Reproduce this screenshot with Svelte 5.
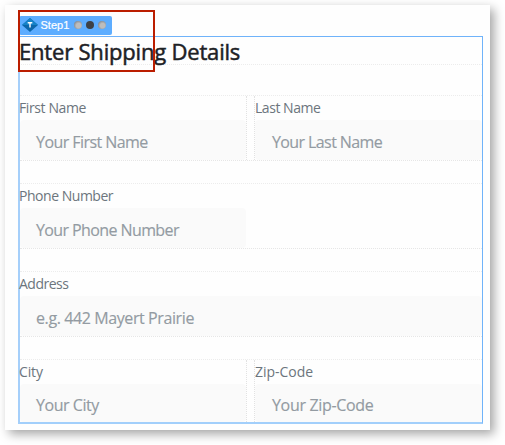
<script>
  const rows = [
    [
      { label: 'First Name', hint: 'Your First Name', labelSpacing: -0.4, hintSpacing: -0.56 },
      { label: 'Last Name', hint: 'Your Last Name', labelSpacing: -0.46, hintSpacing: -0.6 },
    ],
    [{ label: 'Phone Number', hint: 'Your Phone Number', labelSpacing: -0.47, hintSpacing: -0.6, half: true }],
    [{ label: 'Address', hint: 'e.g. 442 Mayert Prairie', labelSpacing: -0.5, hintSpacing: -0.4 }],
    [
      { label: 'City', hint: 'Your City', labelSpacing: -0.15, hintSpacing: -0.46 },
      { label: 'Zip-Code', hint: 'Your Zip-Code', labelSpacing: -0.03, hintSpacing: -0.33 },
    ],
  ];
</script>

<main>
  <section class="card">
    <form class="step">
      <h1>Enter Shipping Details</h1>
      {#each rows as row}
        <div class="row" class:single={row.length === 1}>
          {#each row as field}
            <div class="col" class:half={field.half}>
              <span class="label" style="letter-spacing: {field.labelSpacing}px">{field.label}</span>
              <div class="input" style="letter-spacing: {field.hintSpacing}px"><span>{field.hint}</span></div>
            </div>
          {/each}
        </div>
      {/each}
      <div class="tag">
        <svg class="logo" width="16" height="14" viewBox="0 0 16 14">
          <path d="M8 0L16 7L8 14L0 7Z" fill="#0c67ab" />
          <path d="M8 0L16 7H0Z" fill="#1683c8" />
          <path d="M5.7 4.8H10.3M8 4.8V9.6" stroke="#fff" stroke-width="1.4" fill="none" />
        </svg>
        <span class="name">Step1</span>
        <i></i><i class="on"></i><i></i>
      </div>
      <div class="marker"></div>
    </form>
  </section>
</main>

<style>
  :global(body) { margin: 0; background: #fff; }
  main {
    box-sizing: border-box;
    width: 505px;
    height: 445px;
    padding: 5px 15px 15px 5px;
    overflow: hidden;
    background: #fff;
    font-family: "Open Sans", "Noto Sans", sans-serif;
  }
  .card {
    box-sizing: border-box;
    width: 485px;
    height: 425px;
    padding: 31px 7px 6px 13px;
    background: #fefefe;
    box-shadow: 4px 4px 10px rgba(0, 0, 0, .36);
  }
  .step {
    position: relative;
    box-sizing: border-box;
    width: 465px;
    height: 388px;
    border: 1px solid #6fb3fa;
    border-left: 2px solid #a5cffa;
    border-bottom: 2px solid #a2cffb;
  }
  h1 {
    box-sizing: border-box;
    height: 28px;
    margin: 0 0 30px -1px;
    border-bottom: 1px dotted #ececec;
    color: #1d2125;
    font-size: 22px;
    font-weight: 400;
    -webkit-text-stroke: .5px #1d2125;
    line-height: 28px;
    letter-spacing: -.19px;
    white-space: nowrap;
  }
  .row {
    display: flex;
    gap: 7px;
    box-sizing: border-box;
    height: 66px;
    margin-bottom: 22px;
    border-top: 1px dotted #ececec;
    border-bottom: 1px dotted #e6e6e6;
  }
  .row:nth-of-type(4) { height: 63px; margin: 0; border-bottom: 0; }
  .col { flex: 1; box-sizing: border-box; min-width: 0; }
  .row:not(.single) .col:first-child { flex: 0 0 227px; border-right: 1px dotted #e2e2e2; }
  .row:not(.single) .col:last-child { border-left: 1px dotted #e2e2e2; }
  .row:not(.single) .col:last-child .label { margin-left: 0; }
  .half { flex: 0 0 226px; }
  .label {
    display: block;
    height: 24px;
    color: #6c757d;
    font-size: 14px;
    line-height: 23px;
    margin-left: -1px;
    white-space: nowrap;
  }
  .input {
    display: flex;
    align-items: center;
    box-sizing: border-box;
    height: 40px;
    padding: 3px 0 0 16px;
    border-radius: 4px;
    background: #fafafa;
    color: #939ba2;
    font-size: 16px;
    -webkit-text-stroke: .15px #939ba2;
    white-space: nowrap;
  }
  .row:not(.single) .col:last-child .input { padding-left: 17px; }
  .row:nth-of-type(4) .input { height: 38px; padding-top: 4px; }
  .tag {
    position: absolute;
    left: -1px;
    top: -21px;
    display: flex;
    align-items: center;
    box-sizing: border-box;
    width: 93px;
    height: 19px;
    padding: 0 0 1px 3px;
    border-radius: 2px;
    background: #5dadff;
    color: #fff;
    font: 11px "Liberation Sans", Arial, sans-serif;
  }
  .name { width: 31px; margin: 0 2px 0 2.5px; -webkit-text-stroke: .2px #fff; }
  i {
    width: 8px;
    height: 8px;
    margin: 0 4px 1px 0;
    border-radius: 50%;
    background: radial-gradient(circle at 58% 58%, #bdbdbd 35%, #858b92 75%);
  }
  .on { background: #3e4146; }
  .marker {
    position: absolute;
    left: -2px;
    top: -27px;
    box-sizing: border-box;
    width: 137px;
    height: 62px;
    border: 2px solid #bb1d00;
  }
</style>
